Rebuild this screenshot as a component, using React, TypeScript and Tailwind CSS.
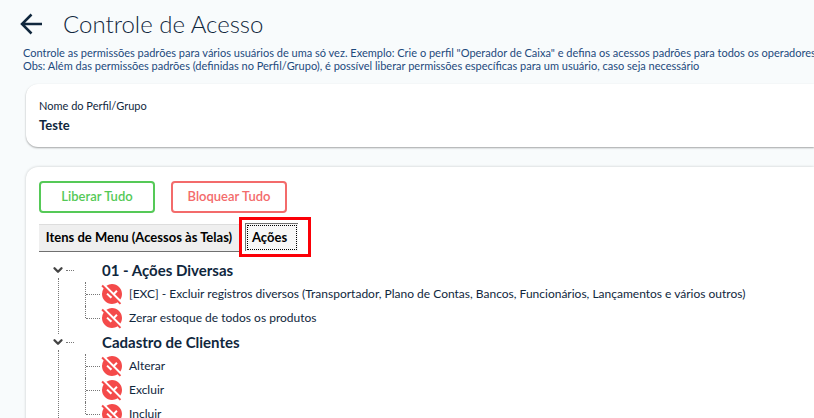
import { useState } from "react";
import { ChevronDown } from "lucide-react";
import { MdUnpublished } from "react-icons/md";

type ActionGroup = {
  name: string;
  actions: string[];
};

const GROUPS: ActionGroup[] = [
  {
    name: "01 - Ações Diversas",
    actions: [
      "[EXC] - Excluir registros diversos (Transportador, Plano de Contas, Bancos, Funcionários, Lançamentos e vários outros)",
      "Zerar estoque de todos os produtos",
    ],
  },
  {
    name: "Cadastro de Clientes",
    actions: ["Alterar", "Excluir", "Incluir"],
  },
];

function TreeGroup({ group }: { group: ActionGroup }) {
  const [open, setOpen] = useState(true);

  return (
    <li>
      <div className="flex h-6 items-center">
        <button
          type="button"
          aria-label={group.name}
          aria-expanded={open}
          onClick={() => setOpen(!open)}
          className="flex h-6 w-4 shrink-0 items-center justify-center text-[#444]"
        >
          <ChevronDown size={14} strokeWidth={4} />
        </button>
        <span className="w-2 border-t border-dotted border-[#777]" />
        <span className="ml-7 text-[15px] leading-6 font-bold">{group.name}</span>
      </div>
      {open && (
        <ul className="-my-1 ml-2 border-l border-dotted border-[#777] py-1 pl-[26px]">
          {group.actions.map((action) => (
            <li key={action} className="group flex h-6 items-center">
              <span className="h-6 w-px shrink-0">
                <span className="block h-6 border-l border-dotted border-[#777] group-last:h-3" />
              </span>
              <span className="w-[14px] shrink-0 border-t border-dotted border-[#777]" />
              <MdUnpublished size={24} className="shrink-0 text-[#f44a4a]" />
              <span className="ml-[5px] text-xs leading-6 whitespace-nowrap">{action}</span>
            </li>
          ))}
        </ul>
      )}
    </li>
  );
}

export default function App() {
  return (
    <div className="h-screen overflow-hidden bg-[#f8fbfc] pl-[23px] font-['Lato',sans-serif] text-[#10273d]">
      <header className="flex h-[46px] items-center gap-5 pt-[2px]">
        <button type="button" aria-label="Voltar" className="-ml-1 flex w-6 justify-center">
          <svg width="24" height="24" viewBox="0 0 24 24" fill="none" stroke="currentColor" strokeWidth="2.5">
            <path d="M23 12H3M12.5 2.5L3 12l9.500 9.500" />
          </svg>
        </button>
        <h1 className="text-2xl font-light">Controle de Acesso</h1>
      </header>

      <p className="text-[11px] leading-[13px] whitespace-nowrap text-[#1d4a7c]">
        Controle as permissões padrões para vários usuários de uma só vez. Exemplo: Crie o perfil
        "Operador de Caixa" e defina os acessos padrões para todos os operadores de caixa
        <br />
        Obs: Além das permissões padrões (definidas no Perfil/Grupo), é possível liberar permissões
        específicas para um usuário, caso seja necessário
      </p>

      <main className="ml-[3px] pt-3">
        <section className="rounded-l-xl bg-white px-[13px] pt-3 pb-[13px] shadow-[0_1px_2px_rgba(0,0,0,0.35)]">
          <dl>
            <dt className="text-[11px] leading-5">Nome do Perfil/Grupo</dt>
            <dd className="text-[13px] leading-[18px] font-bold">Teste</dd>
          </dl>
        </section>

        <section className="mt-5 min-h-screen rounded-l-xl bg-white px-[13px] pt-[14px] shadow-[0_0_3px_rgba(0,0,0,0.2)]">
          <div className="flex gap-4">
            <button
              type="button"
              className="h-8 w-[116px] rounded border-2 border-[#55c957] text-[13px] font-semibold text-[#55c957]"
            >
              Liberar Tudo
            </button>
            <button
              type="button"
              className="h-8 w-[116px] rounded border-2 border-[#f36b6b] text-[13px] font-semibold text-[#f36b6b]"
            >
              Bloquear Tudo
            </button>
          </div>

          <div role="tablist" className="mt-1 flex items-center text-[13px] font-bold text-black">
            <button
              type="button"
              role="tab"
              aria-selected={false}
              className="mt-[2px] h-7 w-[200px] border-t border-b border-t-[#ddd] border-b-[#707070] bg-[#efefef] whitespace-nowrap"
            >
              Itens de Menu (Acessos às Telas)
            </button>
            <div className="border-[3px] border-[#fb0007] py-[3px] pr-[10px] pl-[3px]">
              <button
                type="button"
                role="tab"
                aria-selected
                className="h-7 w-[53px] border-t border-l border-[#707070] bg-[#f7f7f7] p-px"
              >
                <span className="flex h-full items-center border border-dotted border-black pl-1">Ações</span>
              </button>
            </div>
          </div>

          <ul className="mt-px ml-[11px]">
            {GROUPS.map((group) => (
              <TreeGroup key={group.name} group={group} />
            ))}
          </ul>
        </section>
      </main>
    </div>
  );
}
